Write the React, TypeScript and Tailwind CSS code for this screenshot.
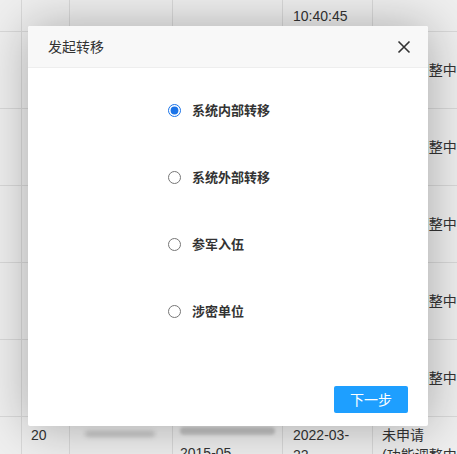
import React from 'react';

interface RowData {
  id: string;
  date: string[];
  status: string[];
  blur: boolean;
  birth?: string;
}

const rows: RowData[] = [
  { id: '', date: ['10:40:45'], status: [''], blur: false },
  { id: '15', date: ['2022-03-', '22', '10:40:45'], status: ['未申请', '(功能调整中', ')'], blur: true },
  { id: '16', date: ['2022-03-', '22', '10:40:45'], status: ['未申请', '(功能调整中', ')'], blur: true },
  { id: '17', date: ['2022-03-', '22', '10:40:45'], status: ['未申请', '(功能调整中', ')'], blur: true },
  { id: '18', date: ['2022-03-', '22', '10:40:45'], status: ['未申请', '(功能调整中', ')'], blur: true },
  { id: '19', date: ['2022-03-', '22', '10:40:45'], status: ['未申请', '(功能调整中', ')'], blur: true },
  { id: '20', date: ['2022-03-', '22', '10:40:45'], status: ['未申请', '(功能调整中', ')'], blur: true, birth: '2015-05' },
];

const options = ['系统内部转移', '系统外部转移', '参军入伍', '涉密单位'];

const TableRow = ({ row, first }: { row: RowData; first: boolean }) => {
  const h = first ? 'h-[32px] items-end' : 'h-[77px] items-center';
  return (
    <div className={`flex border-b border-[#d9d9d9] ${h}`}>
      <div className="w-[22px] self-stretch border-r border-[#d9d9d9]" />
      <div className="w-[48px] self-stretch border-r border-[#d9d9d9] flex items-start pl-[9px] pt-[8px]">
        {!first && <span className="leading-[20px]">{row.id}</span>}
      </div>
      <div className="w-[103px] self-stretch border-r border-[#d9d9d9] flex items-start pl-[15px] pt-[14px]">
        {row.blur && <div className="h-[6px] w-[70px] rounded bg-[#c8c8c8] blur-[2px]" />}
      </div>
      <div className="w-[110px] self-stretch border-r border-[#d9d9d9] flex flex-col pl-[7px] pt-[10px]">
        {row.blur && <div className="h-[8px] w-[95px] rounded bg-[#c4c4c4] blur-[1.5px]" />}
        {row.birth && <span className="leading-[20px] mt-[8px]">{row.birth}</span>}
      </div>
      <div className={`w-[90px] self-stretch border-r border-[#d9d9d9] flex flex-col pl-[10px] ${first ? 'justify-end pb-[5px]' : 'pt-[8px]'}`}>
        {row.date.map((d, i) => (
          <span key={i} className="leading-[20px]">{d}</span>
        ))}
      </div>
      <div className="flex-1 self-stretch flex flex-col pl-[9px] pt-[8px] whitespace-nowrap">
        {row.status.map((s, i) => (
          <span key={i} className="leading-[20px]">{s}</span>
        ))}
      </div>
    </div>
  );
};

export default function App() {
  return (
    <div
      className="relative w-[457px] h-[454px] overflow-hidden bg-[#efefef] text-[14px] text-[#333]"
      style={{ fontFamily: '"Liberation Sans", Arial, "Noto Sans CJK SC", sans-serif' }}
    >
      <div className="flex flex-col">
        {rows.map((r, i) => (
          <TableRow key={i} row={r} first={i === 0} />
        ))}
      </div>

      <div
        className="absolute left-[28px] top-[26px] w-[400px] h-[400px] bg-white rounded-[2px] shadow-[1px_1px_50px_rgba(0,0,0,0.3)] flex flex-col"
        style={{ fontFamily: '"Noto Sans CJK SC", "Liberation Sans", sans-serif' }}
      >
        <div className="h-[42px] shrink-0 bg-[#f8f8f8] border-b border-[#eeeeee] rounded-t-[2px] flex items-center justify-between pl-[20px] pr-[17px]">
          <span className="text-[14px] text-[#333]">发起转移</span>
          <svg width="14" height="14" viewBox="0 0 14 14" className="text-[#333]">
            <path d="M1.5 1.5 L12.5 12.5 M12.5 1.5 L1.5 12.5" stroke="currentColor" strokeWidth="1.6" fill="none" />
          </svg>
        </div>
        <div className="flex-1 flex flex-col pl-[140px] pt-[32px] gap-[47px]">
          {options.map((o, i) => (
            <label key={o} className="flex items-center h-[20px] gap-[11px]">
              <input
                type="radio"
                name="transfer"
                defaultChecked={i === 0}
                className="m-0 w-[13px] h-[13px] accent-[#1a73e8]"
              />
              <span className="text-[13px] font-bold text-[#333]">{o}</span>
            </label>
          ))}
        </div>
        <div className="flex justify-end pr-[20px] pb-[13px]">
          <button className="w-[74px] h-[27px] rounded-[2px] bg-[#1e9fff] text-white text-[14px]">
            下一步
          </button>
        </div>
      </div>
    </div>
  );
}
